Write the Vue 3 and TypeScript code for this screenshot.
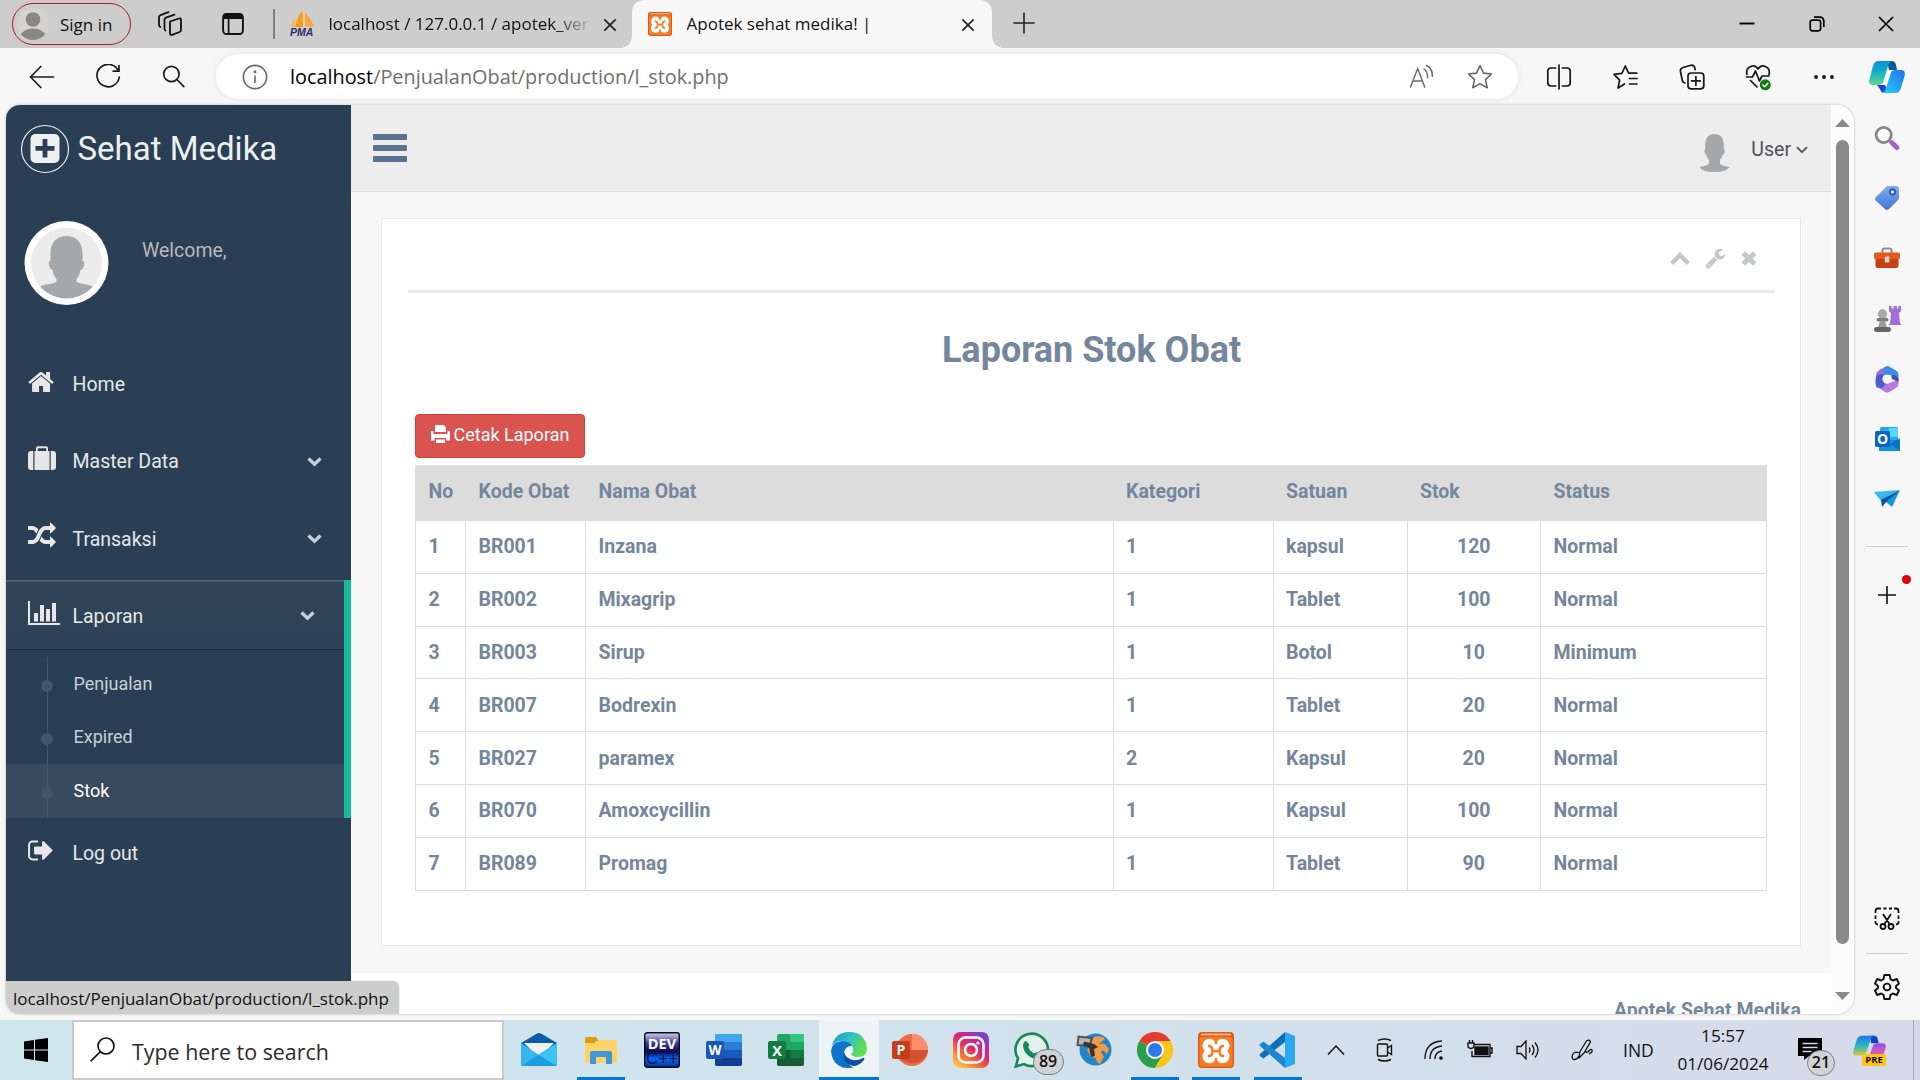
<script setup lang="ts">
interface Row {
  kode: string
  nama: string
  kategori: string
  satuan: string
  stok: number
  status: string
}

const columns: string[] = ['No', 'Kode Obat', 'Nama Obat', 'Kategori', 'Satuan', 'Stok', 'Status']

const rows: Row[] = [
  { kode: 'BR001', nama: 'Inzana', kategori: '1', satuan: 'kapsul', stok: 120, status: 'Normal' },
  { kode: 'BR002', nama: 'Mixagrip', kategori: '1', satuan: 'Tablet', stok: 100, status: 'Normal' },
  { kode: 'BR003', nama: 'Sirup', kategori: '1', satuan: 'Botol', stok: 10, status: 'Minimum' },
  { kode: 'BR007', nama: 'Bodrexin', kategori: '1', satuan: 'Tablet', stok: 20, status: 'Normal' },
  { kode: 'BR027', nama: 'paramex', kategori: '2', satuan: 'Kapsul', stok: 20, status: 'Normal' },
  { kode: 'BR070', nama: 'Amoxcycillin', kategori: '1', satuan: 'Kapsul', stok: 100, status: 'Normal' },
  { kode: 'BR089', nama: 'Promag', kategori: '1', satuan: 'Tablet', stok: 90, status: 'Normal' },
]

const reports: string[] = ['Penjualan', 'Expired', 'Stok']
const currentReport = 'Stok'
</script>

<template>
  <div class="screen">
    <!-- tab strip -->
    <header class="tabs">
      <div class="signin">
        <svg width="32" height="32" viewBox="0 0 32 32">
          <defs><clipPath id="av"><circle cx="16" cy="16" r="16" /></clipPath></defs>
          <circle cx="16" cy="16" r="16" fill="#d6d3cf" />
          <g clip-path="url(#av)" fill="#8a8683"><circle cx="16" cy="11.5" r="7.3" /><ellipse cx="16" cy="29" rx="12.5" ry="8.5" /></g>
        </svg>
        <span>Sign in</span>
      </div>
      <svg class="workspaces" width="26" height="26" viewBox="0 0 26 26" fill="none" stroke="#111" stroke-width="1.8" stroke-linejoin="round" stroke-linecap="round">
        <path d="M13 10.5l9-3q2-.6 2 1.500v10q0 1.500-1.400 2l-7.600 2.800q-2 .6-2-1.500z" />
        <path d="M8.500 19.500q-1-.4-1-2V9q0-1.800 1.500-2.400l8.500-3" />
        <path d="M3.500 16q-1.500-.4-1.500-2.200V6.500q0-1.800 1.500-2.400L11.500 1.200" />
      </svg>
      <svg class="tabactions" width="22" height="24" viewBox="0 0 22 24">
        <rect x="1.100" y="2" width="19.800" height="20" rx="3.500" fill="none" stroke="#111" stroke-width="1.900" />
        <path d="M1 7V5q0-4 4-4h12q4 0 4 4v2z" fill="#111" /><path d="M6.600 7v14" stroke="#111" stroke-width="1.700" />
      </svg>
      <i class="tab-divider"></i>
      <div class="tab">
        <svg width="26" height="26" viewBox="0 0 26 26">
          <path d="M12.500 0q-6 6-7 16h7.500z" fill="#f89c0e" /><path d="M5.500 7q-4 4-4.500 9h4z" fill="#fbb752" />
          <path d="M14.500 1q6 6 9.500 14.500l-8.500.5z" fill="#f9a63a" /><path d="M14 1v16" stroke="#f5d7a0" stroke-width="1" />
          <text x="0" y="25" font-size="10.500" font-weight="700" font-style="italic" font-family="Liberation Sans, sans-serif" fill="#2c2c66">PMA</text>
        </svg>
        <span class="tab-title fade">localhost / 127.0.0.1 / apotek_ver</span>
        <svg class="x" width="14" height="14" viewBox="0 0 14 14"><path d="M1.300 1.300l11.400 11.400M12.700 1.300L1.300 12.700" stroke="#222" stroke-width="1.700" /></svg>
      </div>
      <div class="tab active">
        <svg width="24" height="24" viewBox="0 0 36 36">
          <rect width="36" height="36" rx="4" fill="#d85e18" /><rect x="1.500" y="5" width="33" height="29.500" rx="3" fill="#fb7a24" />
          <path d="M3 2.500h30" stroke="#f9b184" stroke-width="2" />
          <g fill="#fff"><circle cx="11.500" cy="13.800" r="7" /><circle cx="24.500" cy="13.800" r="7" /><circle cx="11.500" cy="24.200" r="7" /><circle cx="24.500" cy="24.200" r="7" /><path d="M12 14h12v10H12z" /></g>
          <path d="M11 14q3.500 0 3.500 5t-3.500 5M25 14q-3.500 0-3.500 5t3.500 5M14.500 19h7M18 6v5M18 27v5" fill="none" stroke="#fb7a24" stroke-width="2.600" stroke-linecap="round" />
        </svg>
        <span class="tab-title">Apotek sehat medika! |</span>
        <svg class="x" width="14" height="14" viewBox="0 0 14 14"><path d="M1.300 1.300l11.400 11.400M12.700 1.300L1.300 12.700" stroke="#222" stroke-width="1.700" /></svg>
      </div>
      <svg class="newtab" width="22" height="22" viewBox="0 0 22 22"><path d="M11 .5v21M.5 11h21" stroke="#222" stroke-width="1.600" /></svg>
      <div class="win">
        <svg width="16" height="16" viewBox="0 0 16 16"><path d="M.5 7.500h15" stroke="#000" stroke-width="1.900" /></svg>
        <svg width="16" height="16" viewBox="0 0 16 16" fill="none" stroke="#000" stroke-width="1.700"><rect x="1.200" y="4.200" width="10.400" height="10.600" rx="2.200" /><path d="M5 1.200h5.500q4.300 0 4.300 4.300V11" /></svg>
        <svg width="16" height="16" viewBox="0 0 16 16"><path d="M1 1l14 14M15 1L1 15" stroke="#000" stroke-width="1.700" /></svg>
      </div>
    </header>

    <!-- address row -->
    <div class="toolbar">
      <div class="nav-btns">
        <svg width="26" height="26" viewBox="0 0 26 26" fill="none" stroke="#1b1b1b" stroke-width="1.700"><path d="M11.800 2.500L1.500 13l10.300 10.500M1.500 13H24.500" stroke-linecap="round" stroke-linejoin="round" /></svg>
        <svg width="26" height="26" viewBox="0 0 26 26" fill="none" stroke="#1b1b1b" stroke-width="1.700" stroke-linecap="round"><path d="M23.200 6.500A11.200 11.200 0 1 0 24.300 13M24 1.500v5.700h-5.800" /></svg>
        <svg width="24" height="26" viewBox="0 0 24 26" fill="none" stroke="#1b1b1b" stroke-width="1.700" stroke-linecap="round"><circle cx="10.400" cy="10" r="7.700" /><path d="M16 15.500L22.800 22.700" /></svg>
      </div>
      <div class="address">
        <svg width="26" height="26" viewBox="0 0 26 26" fill="none" stroke="#666" stroke-width="1.600"><circle cx="13" cy="13" r="11.600" /><path d="M13 11.500v7.500" /><circle cx="13" cy="7.800" r=".7" fill="#666" /></svg>
        <span class="url"><b>localhost</b>/PenjualanObat/production/l_stok.php</span>
        <svg class="aloud" width="26" height="26" viewBox="0 0 26 26" fill="none" stroke="#6d6d6d" stroke-width="1.500" stroke-linecap="round"><path d="M2.500 23L9.700 4.500l7 18.500M5 17h9.300M16 5q4 3 3.500 8.500M18.500 1.500q6.500 3.500 5.800 11" /></svg>
        <svg class="star" width="26" height="26" viewBox="0 0 26 26" fill="none" stroke="#666" stroke-width="1.600" stroke-linejoin="round"><path d="M13 1.500l3.500 7.600 7.900.9-5.900 5.600 1.700 8.100-7.200-4.100-7.200 4.100 1.700-8.100L1.600 10l7.900-.9z" /></svg>
      </div>
      <div class="actions">
        <svg width="26" height="26" viewBox="0 0 26 26" fill="none" stroke="#161616" stroke-width="1.700"><path d="M10.300 4H5Q1.800 4 1.800 7.200v11.600Q1.800 22 5 22h5.300M15.700 4H21q3.200 0 3.200 3.200v11.600Q24.200 22 21 22h-5.300M13 .5v25" /></svg>
        <svg width="26" height="26" viewBox="0 0 26 26" fill="none" stroke="#161616" stroke-width="1.700" stroke-linejoin="round" stroke-linecap="round"><path d="M12.500 20l-6.500 4 1.600-7.800L2 10.300l7.900-1L13.300 2l3.300 7.200h8.200M17.500 14.500h7.500M17.500 20h7.500" /></svg>
        <svg width="26" height="26" viewBox="0 0 26 26" fill="none" stroke="#161616" stroke-width="1.700" stroke-linecap="round"><rect x="9" y="9" width="15.800" height="15.800" rx="3" /><path d="M16.900 12.500v8.800M12.500 16.900h8.800M5.800 18.800q-2-.3-2.500-2.300L1.500 7.500Q1 4.500 4 3.500L12 1.300q2.800-.5 3.600 2.200l.6 2.200" /></svg>
        <svg width="26" height="28" viewBox="0 0 26 28" fill="none" stroke="#161616" stroke-width="1.700" stroke-linecap="round" stroke-linejoin="round"><path d="M2 11.500C0 4 9 0 13 6c4-6 13-2 11 5.500M1.500 14h6l3-6 4 10 2.500-5h7M5.500 17.500L12 24" /><circle cx="20.300" cy="21.800" r="5.500" fill="#107c10" stroke="none" /><path d="M17.800 22l1.800 1.800 3.300-3.600" stroke="#fff" stroke-width="1.500" /></svg>
        <svg width="26" height="26" viewBox="0 0 26 26" fill="#161616"><circle cx="5" cy="13" r="1.900" /><circle cx="13" cy="13" r="1.900" /><circle cx="21" cy="13" r="1.900" /></svg>
      </div>
      <svg class="copilot" width="36" height="34" viewBox="0 0 36 34">
        <defs>
          <linearGradient id="cp1" x1="0" y1="0" x2="0" y2="1"><stop offset="0" stop-color="#0a8fe0" /><stop offset=".5" stop-color="#16b4c4" /><stop offset="1" stop-color="#63d98c" /></linearGradient>
          <linearGradient id="cp2" x1="0" y1="1" x2="1" y2="0"><stop offset="0" stop-color="#22d4ff" /><stop offset="1" stop-color="#1f6fe8" /></linearGradient>
        </defs>
        <path d="M18 1h5q3 0 4 4l1 5h-8z" fill="#0c5a96" /><path d="M8 25h8l3 8h-3q-4 0-5-4z" fill="#1545d8" />
        <path d="M9.500 1H23q-3 1-4 5l-4.500 15q-1 4-5 4H4q-5 0-3.500-6L4 6q1.500-5 5.500-5z" fill="url(#cp1)" />
        <path d="M26.500 33H13q3-1 4-5l4.500-14q1-4 5-4H32q5 0 3.500 6L32 28q-1.500 5-5.500 5z" fill="url(#cp2)" />
      </svg>
    </div>

    <div class="middle">
      <div class="viewport">
        <!-- application sidebar -->
        <aside class="side">
          <div class="brand">
            <svg width="50" height="50" viewBox="0 0 50 50"><circle cx="25" cy="25" r="23.500" fill="none" stroke="#eaeaea" stroke-width="1.200" /><rect x="10.500" y="10" width="29" height="29" rx="5" fill="#ecf0f1" /><path d="M25 15v18.500M15.500 24.300h19" stroke="#2a3f54" stroke-width="4.800" /></svg>
            <span>Sehat Medika</span>
          </div>
          <div class="profile">
            <svg width="85" height="84" viewBox="0 0 85 84">
              <defs><clipPath id="pf"><circle cx="42.500" cy="42" r="35.500" /></clipPath></defs>
              <circle cx="42.500" cy="42" r="42" fill="#fff" /><circle cx="42.500" cy="42" r="35.500" fill="#ececec" />
              <path clip-path="url(#pf)" fill="#a4a8ab" d="M42.500 15C52 15 59 21 58.500 34v6q3 0 1 6-1 3-3 3-1 6-4 9v3q2 1 7 2 7 1 9.500 3v15h-53V66q2.500-2 9.500-3 5-1 7-2v-3q-3-3-4-9-2 0-3-3-2-6 1-6v-6C26 21 33 15 42.500 15z" />
            </svg>
            <span>Welcome,</span>
          </div>
          <ul class="menu">
            <li>
              <a>
                <svg width="28" height="28" viewBox="0 0 1792 1792" fill="#e7e7e7"><path transform="translate(-60 0)" d="M1472 992v480q0 26-19 45t-45 19h-384v-384h-256v384h-384q-26 0-45-19t-19-45v-480q0-1 .5-3t.5-3l575-474 575 474q1 2 1 6zm223-69l-62 74q-8 9-21 11h-3q-13 0-21-7l-692-577-692 577q-12 8-24 7-13-2-21-11l-62-74q-8-10-7-23.500t11-21.500l719-599q32-26 76-26t76 26l244 204v-195q0-14 9-23t23-9h192q14 0 23 9t9 23v408l219 182q10 8 11 21.500t-7 23.500z" /></svg>
                <span>Home</span>
              </a>
            </li>
            <li>
              <a>
                <svg width="28" height="28" viewBox="0 0 28 28" fill="#e7e7e7"><path d="M6.500 6v19h15V6H20V3q0-1.800-1.800-1.800H9.800Q8 1.200 8 3v3zm3.300-2.800h8.400V6H9.800zM5.300 6v19H3.200Q0 25 0 21.800V9.200Q0 6 3.200 6zM22.700 6v19h2.100q3.200 0 3.200-3.200V9.200Q28 6 24.800 6z" fill-rule="evenodd" /></svg>
                <span>Master Data</span>
                <svg class="chev" width="15" height="10" viewBox="0 0 15 10"><path d="M1.500 1.500l6 5.800 6-5.800" fill="none" stroke="#c4cfda" stroke-width="3.300" /></svg>
              </a>
            </li>
            <li>
              <a>
                <svg width="28" height="28" viewBox="0 0 1792 1792" fill="#e7e7e7"><path d="M666 481q-60 92-137 273-22-45-37-72.500t-40.500-63.500-51-56.500-63-35-81.500-14.500h-224q-14 0-23-9t-9-23v-192q0-14 9-23t23-9h224q250 0 410 225zm1126 799q0 14-9 23l-320 320q-9 9-23 9-13 0-22.500-9.500t-9.500-22.500v-192q-32 0-85 .5t-81 1-73-1-71-5-64-10.500-63-18.500-58-28.500-59-40-55-53.500-56-69.500q59-93 136-273 22 45 37 72.500t40.500 63.500 51 56.500 63 35 81.500 14.500h256v-192q0-14 9-23t23-9q12 0 24 10l319 319q9 9 9 23zm0-896q0 14-9 23l-320 320q-9 9-23 9-13 0-22.500-9.500t-9.500-22.500v-192h-256q-48 0-87 15t-69 45-51 61.500-45 77.500q-32 62-78 171-29 66-49.500 111t-54 105-64 100-74 83-90 68.500-106.500 42-128 16.500h-224q-14 0-23-9t-9-23v-192q0-14 9-23t23-9h224q48 0 87-15t69-45 51-61.500 45-77.500q32-62 78-171 29-66 49.500-111t54-105 64-100 74-83 90-68.500 106.500-42 128-16.500h256v-192q0-14 9-23t23-9q12 0 24 10l319 319q9 9 9 23z" /></svg>
                <span>Transaksi</span>
                <svg class="chev" width="15" height="10" viewBox="0 0 15 10"><path d="M1.500 1.500l6 5.800 6-5.800" fill="none" stroke="#c4cfda" stroke-width="3.300" /></svg>
              </a>
            </li>
            <li class="open">
              <a>
                <svg class="wide" width="32" height="28" viewBox="0 0 32 28" fill="#e7e7e7"><path d="M0 2h2v22h30v2H0zM6 14h4v8.500H6zM12 6h4v16.500h-4zM18 10h4v12.500h-4zM24 4h4v18.500h-4z" /></svg>
                <span>Laporan</span>
                <svg class="chev" width="15" height="10" viewBox="0 0 15 10"><path d="M1.500 1.500l6 5.800 6-5.800" fill="none" stroke="#c4cfda" stroke-width="3.300" /></svg>
              </a>
              <ul class="sub">
                <li v-for="r in reports" :key="r" :class="{ current: r === currentReport }">{{ r }}</li>
              </ul>
            </li>
            <li class="logout">
              <a>
                <svg width="28" height="28" viewBox="0 0 1792 1792" fill="#e7e7e7"><path d="M704 1440q0 4 1 20t.5 26.500-3 23.500-10 19.500-20.500 6.500h-320q-119 0-203.500-84.500t-84.500-203.500v-704q0-119 84.500-203.500t203.500-84.500h320q13 0 22.500 9.500t9.500 22.500q0 4 1 20t.5 26.500-3 23.500-10 19.500-20.500 6.500h-320q-66 0-113 47t-47 113v704q0 66 47 113t113 47h312l11.500 1 11.500 3 8 5.500 7 9 2 13.500zm928-544q0 26-19 45l-544 544q-19 19-45 19t-45-19-19-45v-288h-448q-26 0-45-19t-19-45v-384q0-26 19-45t45-19h448v-288q0-26 19-45t45-19 45 19l544 544q19 19 19 45z" transform="translate(-60 -40)" /></svg>
                <span>Log out</span>
              </a>
            </li>
          </ul>
        </aside>

        <div class="content">
          <nav class="topnav">
            <svg width="34" height="28" viewBox="0 0 34 28" fill="#5a738e"><rect width="34" height="6" rx="1" /><rect y="11" width="34" height="6" rx="1" /><rect y="22" width="34" height="6" rx="1" /></svg>
            <div class="user">
              <svg width="31" height="38" viewBox="0 0 31 38" fill="#a4a8ab"><path d="M15.500 0C21.500 0 25 4 24.800 12v3q1.600.5.500 4-.5 1.500-1.500 1.500-.8 3.500-2.800 5v4q1 2 9.500 3.500Q28 38 15.500 38T.5 33Q9 31.500 10 29.500v-4q-2-1.500-2.800-5-1 0-1.500-1.500-1.100-3.500.5-4v-3C6 4 9.500 0 15.500 0z" /></svg>
              <span>User</span>
              <svg width="12" height="8" viewBox="0 0 12 8"><path d="M1 1.200l5 5 5-5" fill="none" stroke="#515356" stroke-width="1.700" /></svg>
            </div>
          </nav>
          <main>
            <section class="panel">
              <div class="panel-head">
                <svg width="20" height="14" viewBox="0 0 20 14"><path d="M1.800 11.500L10 3l8.200 8.500" fill="none" stroke="#c5c7cb" stroke-width="4.400" /></svg>
                <svg width="21" height="21" viewBox="64 64 1700 1740" fill="#c5c7cb"><path d="M448 1472q0-26-19-45t-45-19-45 19-19 45 19 45 45 19 45-19 19-45zm644-420l-682 682q-37 37-90 37-52 0-91-37l-106-108q-38-36-38-90 0-53 38-91l681-681q39 98 114.500 173.500t173.500 114.500zm634-435q0 39-23 106-47 134-164.500 217.500t-258.500 83.500q-185 0-316.500-131.500t-131.500-316.500 131.500-316.500 316.500-131.500q58 0 121.500 16.500t107.500 46.500q16 11 16 28t-16 28l-293 169v224l193 107q5-3 79-48.500t135.500-81 70.500-35.500q15 0 23.500 10t8.500 25z" /></svg>
                <svg width="16" height="15" viewBox="0 0 16 15"><path d="M2.200 2L13.800 13M13.800 2L2.200 13" stroke="#c5c7cb" stroke-width="5" /></svg>
              </div>
              <h2>Laporan Stok Obat</h2>
              <button class="print">
                <svg width="19" height="18" viewBox="0 0 19 18" fill="#fff"><path d="M5 0h8l2 3v4H4V1q0-1 1-1zM0 6h2.500v3h14V6H19v9.500h-3.800V13H3.800v2.500H0zM5 14.500h9V18H5z" /></svg>
                <span>Cetak Laporan</span>
              </button>
              <table>
                <colgroup><col class="c1" /><col class="c2" /><col class="c3" /><col class="c4" /><col class="c5" /><col class="c6" /><col class="c7" /></colgroup>
                <thead>
                  <tr><th v-for="c in columns" :key="c">{{ c }}</th></tr>
                </thead>
                <tbody>
                  <tr v-for="(r, i) in rows" :key="r.kode">
                    <td>{{ i + 1 }}</td>
                    <td>{{ r.kode }}</td>
                    <td>{{ r.nama }}</td>
                    <td>{{ r.kategori }}</td>
                    <td>{{ r.satuan }}</td>
                    <td class="num">{{ r.stok }}</td>
                    <td>{{ r.status }}</td>
                  </tr>
                </tbody>
              </table>
            </section>
          </main>
          <footer>Apotek Sehat Medika</footer>
        </div>

        <div class="scroll">
          <svg width="15" height="8" viewBox="0 0 15 8"><path d="M7.500 0L15 8H0z" fill="#8a8a8a" /></svg>
          <i></i>
          <svg width="15" height="8" viewBox="0 0 15 8"><path d="M7.500 8L15 0H0z" fill="#8a8a8a" /></svg>
        </div>
        <div class="bubble">localhost/PenjualanObat/production/l_stok.php</div>
      </div>

      <!-- browser side rail -->
      <div class="rail">
        <div class="apps">
          <svg width="26" height="26" viewBox="0 0 26 26" fill="none"><path d="M16 16l2.500 2.500" stroke="#777" stroke-width="3" /><circle cx="9.700" cy="10" r="7.600" stroke="#858585" stroke-width="2.800" fill="#fafafa" /><path d="M18 17.800l4.800 4.800" stroke="#9a63cf" stroke-width="5" stroke-linecap="round" /></svg>
          <svg width="26" height="26" viewBox="0 0 26 26"><defs><linearGradient id="tg" x1="0" y1="0" x2="0" y2="1"><stop offset="0" stop-color="#7fabf4" /><stop offset="1" stop-color="#4673d2" /></linearGradient></defs><path d="M14 1h8q3 0 3 3v8.500q0 1.500-1 2.500l-9 9q-2 2-4 0L2 16q-2-2 0-4l10-10q1-1 2-1z" fill="url(#tg)" /><circle cx="18.500" cy="7" r="2.600" fill="#dce8ff" stroke="#2f4a96" stroke-width="1.600" /></svg>
          <svg width="26" height="26" viewBox="0 0 26 26"><path d="M8.500 8V5.500q0-2 2-2h5q2 0 2 2V8" fill="none" stroke="#8d8d8d" stroke-width="2" /><rect x="1.500" y="12" width="23" height="11" rx="2" fill="#c7400f" /><rect x="0" y="7.500" width="26" height="6.500" rx="1.500" fill="#e35a1c" /><rect x="10.800" y="11.500" width="4.600" height="6" rx="1" fill="#d4d4d4" /></svg>
          <svg width="28" height="28" viewBox="0 0 28 28"><path d="M16 1h2.500v2.500h2V1H24v2.500h1.500V1H28v5l-2 2 .8 9 1.200 3H16l1.200-3 .8-9-2-2z" fill="#a16fdc" /><circle cx="9.500" cy="9" r="4.700" fill="#a9a9a9" /><rect x="3.500" y="13" width="12" height="3.500" rx="1.700" fill="#7c7c7c" /><path d="M7 16h5l2 7H5z" fill="#999" /><rect x="1" y="22" width="17" height="5" rx="2.400" fill="#666" /></svg>
          <svg width="26" height="28" viewBox="0 0 26 28"><path d="M13 1l-6 3q-5 3-5 6v10l6 3 2-4V9z" fill="#9a6fdd" /><path d="M12 1.500Q13.500.5 15 1.500l7 4q2.500 1.500 2.500 4V16l-7-3V9.500L10 13V6q0-3 2-4.500z" fill="#3a8de8" /><path d="M24.500 15v4q0 2.500-2.500 4l-7 4q-2 1-4 0l-6-4 10-5z" fill="#b57ae6" /><path d="M1.500 14v5q0 3 2.500 4 3 1 5-1l4-3-4-3V9q-7 0-7.500 5z" fill="#3459c9" opacity=".8" /><path d="M17.500 14l7 3v-3q-1-4-7-4z" fill="#53358e" opacity=".75" /><circle cx="13" cy="14" r="4.600" fill="#f7f7f7" /></svg>
          <svg width="26" height="26" viewBox="0 0 26 26"><rect x="6" y="1" width="18" height="22" rx="1.500" fill="#28a8ea" /><path d="M15 2h8q1 0 1 1v8h-9z" fill="#50d9ff" /><path d="M5 14h21v9.500q0 1.500-1.500 1.500H5z" fill="#1490df" /><path d="M26 12v13L16 18z" fill="#0a62b4" opacity=".7" /><rect x="1" y="5" width="15" height="16" rx="1.500" fill="#0a64c4" /><text x="8.500" y="18" text-anchor="middle" font-family="Open Sans, sans-serif" font-weight="700" font-size="14" fill="#fff">O</text></svg>
          <svg width="26" height="26" viewBox="0 0 26 26"><path d="M0 6l26-2L7 15z" fill="#36b9ef" /><path d="M26 4L18 21l-7-6z" fill="#1493e0" /><path d="M26 4L7 14l1 7 4-5z" fill="#0a4f9e" /></svg>
        </div>
        <i class="rail-line"></i>
        <div class="add">
          <svg width="18" height="18" viewBox="0 0 18 18"><path d="M9 0v18M0 9h18" stroke="#111" stroke-width="1.600" /></svg>
          <i></i>
        </div>
        <div class="rail-bottom">
          <svg width="26" height="24" viewBox="0 0 26 24" fill="none" stroke="#111" stroke-width="1.800"><path d="M7 1.500H4Q1.500 1.500 1.500 4v2M1.500 8.500V12M1.500 14v1.500Q1.500 17 4 17.500M9.500 1.500h3M15 1.500h3M20 1.500h2q2.500 0 2.500 2.500v2M24.500 8.500V12M24.500 14v1.500q0 1.500-2.500 2M9 7l6.500 10M17 7l-6.500 10" /><circle cx="9" cy="19.500" r="2.500" /><circle cx="17" cy="19.500" r="2.500" /></svg>
          <i class="rail-line"></i>
          <svg width="26" height="28" viewBox="0 0 26 28" fill="none" stroke="#111" stroke-width="1.900" stroke-linejoin="round"><path d="M10.300 2h5.400l.8 4.200 2.300 1.300 4-1.500 2.200 4.600-3 2.400v2l3 2.500-2.200 4.500-4-1.500-2.300 1.300-.8 4.200h-5.400l-.8-4.200-2.300-1.300-4 1.500L1 17.500 4 15v-2l-3-2.400L3.200 6l4 1.500 2.300-1.300z" /><circle cx="13" cy="14" r="3.400" /></svg>
        </div>
      </div>
    </div>

    <!-- desktop taskbar -->
    <div class="taskbar">
      <div class="start"><svg width="24" height="24" viewBox="0 0 24 24"><path d="M0 3.400L10 2v9.500H0zM11 1.800L24 0v11.500H11zM0 12.500h10V22L0 20.600zM11 12.500h13V24l-13-1.800z" /></svg></div>
      <div class="search">
        <svg width="25" height="25" viewBox="0 0 25 25" fill="none" stroke="#111" stroke-width="1.700"><circle cx="16" cy="9" r="8" /><path d="M10.500 14.500L.8 24.200" /></svg>
        <span>Type here to search</span>
      </div>
      <div class="apps-row">
        <div class="app"><svg width="36" height="36" viewBox="0 0 36 36"><path d="M0 11L16 1.500q2-1.200 4 0L36 11v6H0z" fill="#0b5cab" /><path d="M3 11h30L18 26z" fill="#f1f1f4" /><path d="M0 11l18 12L0 34z" fill="#35b6f2" /><path d="M36 11v23H0z" fill="#1c9be6" /><path d="M36 11L17 22.700 36 34z" fill="#3cc4f6" /></svg></div>
        <div class="app run"><svg width="36" height="36" viewBox="0 0 36 36"><path d="M2 7q0-2 2-2h9l3 4h-3l-2 4H2z" fill="#dd9b0a" /><path d="M2 11h11l3-3h16q2 0 2 2v19q0 2-2 2H4q-2 0-2-2z" fill="#fdd368" /><path d="M7 32V21q0-2 2-2h18q2 0 2 2v11h-6v-7H13v7z" fill="#3f96db" /></svg></div>
        <div class="app"><svg width="36" height="36" viewBox="0 0 36 36"><defs><linearGradient id="dv" x1="0" y1="0" x2="0" y2="1"><stop offset="0" stop-color="#d5d4f4" /><stop offset=".3" stop-color="#3d3d9c" /><stop offset=".55" stop-color="#09094a" /><stop offset=".75" stop-color="#0a66ff" /><stop offset="1" stop-color="#08328c" /></linearGradient></defs><rect x=".7" y=".7" width="34.600" height="34.600" rx="2.500" fill="url(#dv)" stroke="#0a0a18" stroke-width="1.400" /><text x="18" y="16.500" text-anchor="middle" font-family="Open Sans, sans-serif" font-weight="700" font-size="14.500" fill="#fff">DEV</text><text x="18" y="32" text-anchor="middle" font-family="Liberation Sans, sans-serif" font-size="17" fill="#03193f">C++</text></svg></div>
        <div class="app"><svg width="36" height="36" viewBox="0 0 36 36"><rect x="9" y="2" width="27" height="32" rx="2" fill="#2b7cd3" /><path d="M9 4q0-2 2-2h23q2 0 2 2v6H9z" fill="#41a5ee" /><path d="M9 18h27v8H9z" fill="#185abd" /><path d="M9 26h27v6q0 2-2 2H11q-2 0-2-2z" fill="#103f91" /><rect y="9" width="18" height="18" rx="2" fill="#1a56b8" /><text x="9" y="23" text-anchor="middle" font-family="Open Sans, sans-serif" font-weight="700" font-size="13.500" fill="#fff">W</text></svg></div>
        <div class="app"><svg width="36" height="36" viewBox="0 0 36 36"><rect x="9" y="2" width="27" height="32" rx="2" fill="#21a366" /><path d="M22 2h12q2 0 2 2v6H22z" fill="#33c481" /><path d="M9 18h13v8H9z" fill="#185c37" /><path d="M22 18h14v8H22z" fill="#107c41" /><path d="M9 26h27v6q0 2-2 2H11q-2 0-2-2z" fill="#185c37" /><rect y="9" width="18" height="18" rx="2" fill="#107c41" /><text x="9" y="23.500" text-anchor="middle" font-family="Open Sans, sans-serif" font-weight="700" font-size="14.500" fill="#fff">X</text></svg></div>
        <div class="app focus"><svg width="36" height="36" viewBox="0 0 36 36"><defs><linearGradient id="eg" x1="0" y1="0" x2="1" y2=".5"><stop offset="0" stop-color="#2496dc" /><stop offset=".5" stop-color="#2fc0c4" /><stop offset="1" stop-color="#64e04c" /></linearGradient></defs><path d="M1 14Q4 0 18 0q16 0 18 16 0 9-9 9-6 0-7-3 3-2 2-6-2-6-8-7-8-1-13 5z" fill="url(#eg)" /><path d="M0 19Q1 10 11 9q8 0 10 5-6-1-8 6-1 8 6 13l3 3Q2 38 0 19z" fill="#0c74cc" /><path d="M13 19q-3 12 9 15 6 0 11-6 1-3-1-2-7 4-13 1-6-3-6-8z" fill="#124f9c" /></svg></div>
        <div class="app"><svg width="36" height="36" viewBox="0 0 36 36"><circle cx="20" cy="18" r="16" fill="#ed6c47" /><path d="M20 2a16 16 0 0 1 16 16H20z" fill="#ff8f6b" /><path d="M4.500 18H36a16 16 0 0 1-31.500 0z" fill="#d35230" /><rect y="9" width="18" height="18" rx="2" fill="#c43e1c" /><text x="9" y="23.200" text-anchor="middle" font-family="Open Sans, sans-serif" font-weight="700" font-size="14" fill="#fff">P</text></svg></div>
        <div class="app"><svg width="36" height="36" viewBox="0 0 36 36"><defs><linearGradient id="ig" x1=".1" y1="1" x2=".8" y2="0"><stop offset="0" stop-color="#fed35a" /><stop offset=".3" stop-color="#f77a2c" /><stop offset=".55" stop-color="#e22a66" /><stop offset=".8" stop-color="#b430a4" /><stop offset="1" stop-color="#6b45cf" /></linearGradient></defs><rect width="36" height="36" rx="7" fill="url(#ig)" /><g fill="none" stroke="#fff" stroke-width="2.600"><rect x="5.500" y="5.500" width="25" height="25" rx="7" /><circle cx="18" cy="18" r="6" /></g><circle cx="25" cy="11" r="1.600" fill="#fff" /></svg></div>
        <div class="app">
          <svg width="36" height="36" viewBox="0 0 36 36"><path d="M1.800 34.500L4 26.500a16.200 16.200 0 1 1 6 5.600z" fill="#e5f1ed" stroke="#14895b" stroke-width="2.600" /><path d="M12 9q-3 1-3 5 1 8 9 12 7 3 9-3l-4-3q-2 2-4 1-4-3-5-6 2-1 1-3z" fill="#14895b" /></svg>
          <span class="badge b89">89</span>
        </div>
        <div class="app"><svg width="36" height="36" viewBox="0 0 36 36"><circle cx="19.500" cy="17.500" r="16" fill="#1f86cc" /><path d="M18 5q8-2 11 2l-6 5q4-1 6 0l4 5-2 5-4-4-2 2 3 5-4 7q-4-1-4-6l-5-1-4-7 4-6z" fill="#f29a42" /><path d="M2.500 4.500l13 1.500-1.500 8L1.500 13z" fill="#b9b4a8" stroke="#555" stroke-width="2" /><path d="M8 9.500l10 2.500 4 3-4 2 1 7-4 1-2-9-6-2.500z" fill="#353535" /></svg></div>
        <div class="app run"><svg width="36" height="36" viewBox="0 0 36 36"><path d="M18 18L2.400 9A18 18 0 0 1 33.600 9z" fill="#e33b2e" /><path d="M18 18L2.400 9A18 18 0 0 0 18 36l8-13.500z" fill="#2a9f4b" /><path d="M18 18V9h15.600A18 18 0 0 1 18 36l8-13.500z" fill="#fdc516" /><circle cx="18" cy="18" r="9" fill="#fff" /><circle cx="18" cy="18" r="7" fill="#2b79ee" /></svg></div>
        <div class="app run">
          <svg width="36" height="36" viewBox="0 0 36 36"><rect width="36" height="36" rx="4" fill="#d85e18" /><rect x="1.500" y="5" width="33" height="29.500" rx="3" fill="#fb7a24" /><path d="M3 2.500h30" stroke="#f9b184" stroke-width="2" /><g fill="#fff"><circle cx="11.500" cy="13.800" r="7" /><circle cx="24.500" cy="13.800" r="7" /><circle cx="11.500" cy="24.200" r="7" /><circle cx="24.500" cy="24.200" r="7" /><path d="M12 14h12v10H12z" /></g><path d="M11 14q3.500 0 3.500 5t-3.500 5M25 14q-3.500 0-3.500 5t3.500 5M14.500 19h7M18 6v5M18 27v5" fill="none" stroke="#fb7a24" stroke-width="2.600" stroke-linecap="round" /></svg>
        </div>
        <div class="app run"><svg width="36" height="36" viewBox="0 0 36 36"><path d="M26 0v10L4.500 26.500 1 24q-1-1 0-2z" fill="#0d6fb4" /><path d="M26 36V26L4.500 9.500 1 12q-1 1 0 2z" fill="#1a87cf" /><path d="M26 0l10 4v28l-10 4z" fill="#2aa9f3" /></svg></div>
      </div>
      <div class="tray">
        <svg width="18" height="12" viewBox="0 0 18 12"><path d="M1 10.500L9 2l8 8.500" fill="none" stroke="#111" stroke-width="1.500" /></svg>
        <svg width="18" height="24" viewBox="0 0 18 24" fill="none" stroke="#111" stroke-width="1.400"><rect x="1.500" y="6" width="10" height="12" rx="1" /><path d="M11.500 10l4-2.500v9l-4-2.500M2 2.500Q8.500-.5 15 2.500M2 21.500q6.500 3 13 0" /></svg>
        <svg width="20" height="20" viewBox="0 0 20 20" fill="none" stroke="#111" stroke-width="1.300"><path d="M1 19Q1 2 18 1M6 19Q6 7 18 6M11 19q0-7 7-8" /><circle cx="17" cy="18" r="1.200" fill="#111" /></svg>
        <svg width="26" height="20" viewBox="0 0 26 20" fill="none" stroke="#111" stroke-width="1.400"><path d="M5 4.500h18v12H5V11M23 8h2v5h-2" /><rect x="8" y="7" width="13" height="7.500" fill="#111" /><path d="M1 3h6v3q0 2-3 2.500Q1 8 1 6zM2.500 0v3M5.500 0v3" fill="#d5e0ec" /></svg>
        <svg width="24" height="20" viewBox="0 0 24 20" fill="none" stroke="#111" stroke-width="1.300"><path d="M1 6.500h4L10 1v18L5 13.500H1zM13 7.500q2 2.500 0 5M16 5q4 5 0 10M19 2.500q6 7.500 0 15" /></svg>
        <svg width="22" height="22" viewBox="0 0 22 22" fill="none" stroke="#111" stroke-width="1.300" stroke-linejoin="round"><path d="M9 12.500L15.500 2q2.500-2 4 .8L13 14l-5 5zM8 14q-4-2-6 1-2 4 .5 5.500Q6 21 8 17M14 12q2 2.500 4 0t3-1q1 2-3 4" /></svg>
        <span class="lang">IND</span>
        <div class="clock"><span>15:57</span><span>01/06/2024</span></div>
        <div class="notif"><svg width="24" height="22" viewBox="0 0 24 22"><path d="M0 0h24v18H11l-5 4v-4H0z" /><path d="M4.500 5.500h15M4.500 9.500h15M4.500 13.500h9" stroke="#d5dbe9" stroke-width="1.400" /></svg><span class="badge b21">21</span></div>
        <div class="pre">
          <svg width="33" height="28" viewBox="0 0 36 34" preserveAspectRatio="none">
            <defs><linearGradient id="p1" x1="0" y1="0" x2="0" y2="1"><stop offset="0" stop-color="#1877e8" /><stop offset=".5" stop-color="#25b8c0" /><stop offset="1" stop-color="#d8c83c" /></linearGradient><linearGradient id="p2" x1="0" y1="0" x2="0" y2="1"><stop offset="0" stop-color="#8d55e8" /><stop offset=".6" stop-color="#e65bb0" /><stop offset="1" stop-color="#f8855f" /></linearGradient></defs>
            <path d="M18 1h5q3 0 4 4l1 5h-8z" fill="#1340c4" /><path d="M9.500 1H23q-3 1-4 5l-4.500 15q-1 4-5 4H4q-5 0-3.500-6L4 6q1.500-5 5.500-5z" fill="url(#p1)" /><path d="M26.500 33H13q3-1 4-5l4.500-14q1-4 5-4H32q5 0 3.500 6L32 28q-1.500 5-5.500 5z" fill="url(#p2)" />
          </svg>
          <b>PRE</b>
        </div>
        <i class="peek"></i>
      </div>
    </div>
  </div>
</template>

<style>
body { margin: 0; overflow: hidden; }
</style>

<style scoped>
* { box-sizing: border-box; }
.screen { width: 1920px; height: 1080px; display: flex; flex-direction: column; overflow: hidden; background: #f7f7f7; font-family: 'Open Sans', 'Noto Sans', sans-serif; font-size: 17px; color: #111; }
svg { display: block; flex: none; }
ul { list-style: none; margin: 0; padding: 0; }

.tabs { height: 48px; flex: none; background: #cdcdcd; display: flex; align-items: center; padding-left: 12px; }
.signin { width: 119px; height: 42px; border: 1.500px solid #b11a20; border-radius: 21px; display: flex; align-items: center; padding-left: 4px; gap: 11px; flex: none; }
.workspaces { margin-left: 26px; }
.tabactions { margin-left: 39px; }
.tab-divider { width: 1.500px; height: 30px; background: #808080; margin-left: 29px; flex: none; }
.tab { display: flex; align-items: center; width: 357px; height: 48px; padding-left: 15px; flex: none; }
.tab-title { margin-left: 13px; width: 262px; white-space: nowrap; overflow: hidden; line-height: 26px; }
.fade { -webkit-mask-image: linear-gradient(90deg, #000 225px, transparent 264px); mask-image: linear-gradient(90deg, #000 225px, transparent 264px); }
.x { margin: 1px 0 0 12px; }
.tab.active { width: 360px; background: #f7f7f7; border-radius: 12px 12px 0 0; padding-left: 16px; position: relative; }
.tab.active::before, .tab.active::after { content: ''; position: absolute; bottom: 0; width: 11px; height: 11px; }
.tab.active::before { left: -11px; background: radial-gradient(circle at 0 0, #cdcdcd 10.500px, #f7f7f7 11px); }
.tab.active::after { right: -11px; background: radial-gradient(circle at 100% 0, #cdcdcd 10.500px, #f7f7f7 11px); }
.tab.active .tab-title { margin-left: 15px; }
.newtab { margin: 0 0 2px 21px; }
.win { margin-left: auto; display: flex; gap: 53.500px; padding-right: 26px; }

.toolbar { height: 57px; flex: none; display: flex; align-items: center; padding-left: 29px; }
.nav-btns { display: flex; gap: 40px; width: 187px; flex: none; }
.address { width: 1302px; height: 45px; border-radius: 23px; background: #fff; display: flex; align-items: center; padding-left: 26px; box-shadow: 0 0 7px rgba(0, 0, 0, .09); flex: none; }
.url { font-size: 19.850px; color: #6f6f6f; margin: 0 auto 0 22px; line-height: 30px; white-space: nowrap; }
.url b { font-weight: 400; color: #000; }
.aloud { margin-right: 33px; }
.star { margin-right: 25px; }
.actions { display: flex; gap: 40.300px; margin-left: 28px; align-items: center; }
.copilot { margin-left: 32px; }

.middle { height: 915px; flex: none; display: flex; padding-left: 6px; }
.viewport { width: 1848px; height: 909px; flex: none; display: flex; position: relative; border-radius: 14px 18px 18px 14px; overflow: hidden; background: #fff; box-shadow: 0 0 3px rgba(0, 0, 0, .25); font-family: Roboto, sans-serif; }

.side { width: 345px; height: 877px; background: #2a3f54; flex: none; color: #e7e7e7; font-size: 19.500px; }
.brand { height: 116px; display: flex; align-items: flex-start; padding: 19px 0 0 14px; }
.brand span { font-size: 33px; line-height: 50px; margin-left: 7.500px; color: #ecf0f1; white-space: nowrap; }
.profile { height: 127px; display: flex; padding-left: 18px; }
.profile span { margin: 16px 0 0 33px; line-height: 28px; color: #bab8b8; }
.menu > li { margin-bottom: 8.300px; }
.menu > li.open { margin: 0; border-right: 7px solid #1abb9c; }
.menu a { display: flex; align-items: center; height: 69px; padding: 4px 29px 0 22px; }
.menu a > svg:first-child { margin: -6px 16.500px 0 0; }
.menu a > svg.wide { margin-right: 12.500px; }
.menu .logout a { padding-top: 3px; }
.menu .chev { margin-left: auto; }
.open > a { background: linear-gradient(#334556, #2c4257); box-shadow: inset 0 1.500px 0 rgba(255, 255, 255, .17), 0 1px 0 rgba(0, 0, 0, .3); }
.sub { padding-top: 8px; }
.sub li { height: 53.600px; line-height: 53px; padding-left: 67.500px; font-size: 18px; color: rgba(255, 255, 255, .75); position: relative; }
.sub li::before { content: ''; position: absolute; left: 41px; top: 0; width: 1px; height: 100%; background: #425668; }
.sub li::after { content: ''; position: absolute; left: 35px; top: 23px; width: 12px; height: 12px; border-radius: 50%; background: #425668; }
.sub li.current { background: #384a5e; color: #fff; }

.content { width: 1480px; background: #f7f7f7; flex: none; color: #73879c; }
.topnav { height: 87px; background: #ededed; border-bottom: 1px solid #d9dee4; display: flex; align-items: flex-start; padding: 29px 23px 0 22px; }
.user { margin-left: auto; display: flex; align-items: flex-start; color: #515356; font-size: 19.500px; }
.user span { margin: 2px 5px 0 21px; line-height: 28px; height: 28px; }
.user svg:last-child { margin-top: 12px; }
main { height: 781px; padding: 26px 30px 0; }
.panel { height: 728px; background: #fff; border: 1px solid #e6e9ed; padding: 0 25px 0 26px; }
.panel-head { height: 74px; border-bottom: 3px solid #e6e9ed; display: flex; align-items: flex-start; justify-content: flex-end; padding: 29px 18px 0 0; gap: 15px; }
.panel-head svg:first-child { margin-top: 4px; }
.panel-head svg:last-child { margin-top: 3px; }
h2 { margin: 34px 0 0; height: 46px; line-height: 46px; text-align: center; font-size: 36px; font-weight: 700; }
.print { display: flex; align-items: center; width: 170px; height: 44px; margin: 41px 0 0 7px; padding: 0 0 4px 14.500px; background: #d9534f; border: 1px solid #d43f3a; border-radius: 4px; color: #fff; font: 18px Roboto, sans-serif; gap: 4px; white-space: nowrap; }
.print svg { margin-bottom: 0; }
table { width: 1351px; margin: 7px 0 0 7px; table-layout: fixed; border-collapse: collapse; font-size: 19.500px; font-weight: 700; }
.c1 { width: 50px; } .c2 { width: 120px; } .c3 { width: 527.500px; } .c4 { width: 160px; } .c5 { width: 134px; } .c6 { width: 133.500px; } .c7 { width: 226px; }
th { height: 55px; background: #dcdcdc; border: 1px solid #dcdcdc; padding: 0 0 4px 12.500px; text-align: left; }
td { height: 52.800px; border: 1px solid #ddd; padding: 0 0 0 12.500px; }
td.num { text-align: center; padding: 0; }
footer { height: 41px; background: #fff; padding: 26px 30px 0; text-align: right; font-size: 19.500px; font-weight: 700; line-height: 24px; overflow: hidden; }

.scroll { width: 23px; background: #fcfcfc; display: flex; flex-direction: column; align-items: center; padding-top: 14px; }
.scroll i { width: 13px; height: 804px; border-radius: 7px; background: #8a8a8a; margin: 13px 0 48px; }
.bubble { position: absolute; left: -1px; bottom: 0; width: 394px; height: 33px; background: #cdcdcd; border-radius: 0 6px 0 10px; padding-left: 8px; font: 17px/35px 'Open Sans', sans-serif; color: #111; white-space: nowrap; box-shadow: 0 0 2px rgba(0, 0, 0, .2); }

.rail { width: 66px; display: flex; flex-direction: column; align-items: center; }
.apps { height: 441px; padding-top: 3px; display: grid; grid-auto-rows: 60.200px; place-items: center; }
.rail-line { width: 42px; height: 1px; background: #cfcfcf; flex: none; }
.add { margin-top: 39px; position: relative; }
.add i { position: absolute; width: 9px; height: 9px; border-radius: 50%; background: #e00000; left: 24px; top: -11px; }
.rail-bottom { margin-top: 303px; display: flex; flex-direction: column; align-items: center; gap: 20px; }
.rail-bottom .rail-line { margin-top: 2px; }
.rail-bottom svg:last-child { margin-top: -1px; }

.taskbar { height: 60px; flex: none; display: flex; align-items: center; background: linear-gradient(90deg, #cfe6ed 0%, #cfe4ec 30%, #d2e0ec 65%, #d5dae8 100%); }
.start { width: 72px; padding-left: 24px; flex: none; }
.search { width: 432px; height: 60px; border: 2px solid #c9c9c9; background: #fff; display: flex; align-items: center; padding-left: 16px; font-size: 21.400px; color: #2b2b2b; gap: 17px; flex: none; }
.search span { padding-top: 2px; }
.search svg { margin-bottom: 2px; }
.apps-row { display: flex; margin-left: 4px; height: 60px; width: 799px; flex: none; }
.app { width: 61.300px; flex: none; display: flex; align-items: center; justify-content: center; position: relative; }
.app:nth-child(-n+5) { width: 61.800px; }
.app.run::after { content: ''; position: absolute; bottom: 0; left: 7px; width: 48px; height: 3px; background: #0078d7; }
.app.focus { width: 60px; margin-left: 2px; background: #ecf4f8; border-bottom: 3px solid #0078d7; padding-top: 3px; }
.badge { position: absolute; height: 26px; border-radius: 13px; background: #cfd3d6; border: 1px solid #7b7f82; font-size: 16px; line-height: 23px; font-weight: 600; text-align: center; color: #111; }
.b89 { width: 31px; left: 31px; top: 29px; }
.b21 { width: 28px; left: 9px; top: 12px; }
.tray { display: flex; align-items: center; height: 60px; margin-left: 20px; flex: 1; }
.tray > svg:nth-child(2) { margin-left: 31px; }
.tray > svg:nth-child(3) { margin-left: 30px; }
.tray > svg:nth-child(4) { margin-left: 23px; }
.tray > svg:nth-child(5) { margin-left: 23px; }
.tray > svg:nth-child(6) { margin-left: 31px; }
.lang { margin-left: 30px; width: 32px; font-size: 17.500px; }
.clock { display: flex; flex-direction: column; width: 96px; text-align: center; margin-left: 20px; font-size: 17.200px; line-height: 28px; padding-bottom: 0; }
.notif { position: relative; margin: 0 0 2px 27px; }
.pre { position: relative; margin: 0 27px 2px 31px; }
.pre b { position: absolute; left: 9px; top: 19px; width: 24px; height: 12px; background: #ffc40c; border-radius: 2px; font-size: 9.500px; line-height: 12px; text-align: center; }
.peek { width: 1px; height: 60px; background: #a3abb8; }
</style>
